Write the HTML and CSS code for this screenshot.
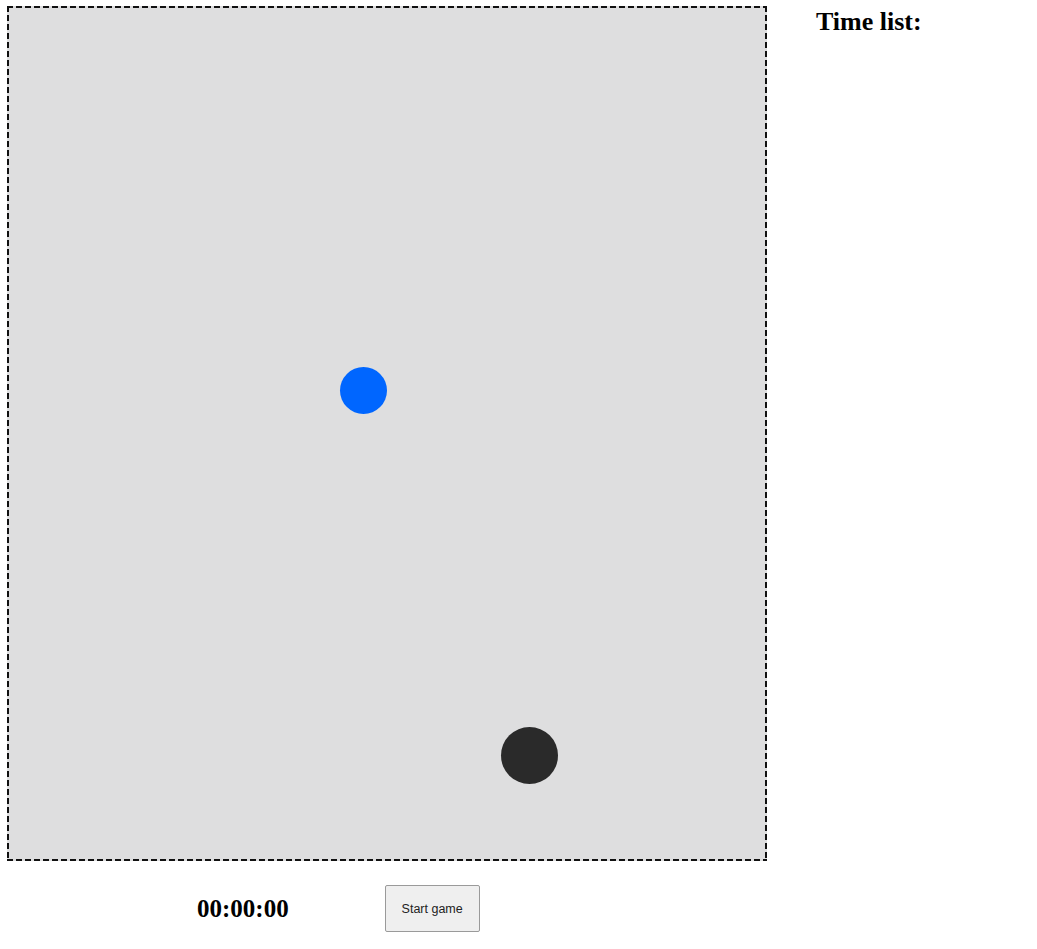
FILE: index.html
```html
<!DOCTYPE html>
<html>
<head>
<meta charset="utf-8">
<link rel="stylesheet" href="styles.css">
</head>
<body>
<div class="page">
  <div class="game-col">
    <div class="field">
      <div class="ball ball-blue"></div>
      <div class="ball ball-dark"></div>
    </div>
    <div class="controls">
      <div class="timer">00:00:00</div>
      <button class="start-btn">Start game</button>
    </div>
  </div>
  <div class="side">
    <h2 class="side-title">Time list:</h2>
  </div>
</div>
</body>
</html>
```
FILE: styles.css
```css
html, body {
  margin: 0;
  background: #ffffff;
}
body {
  padding: 6px 7px;
  font-family: "Liberation Serif", "Times New Roman", serif;
  color: #000;
}
.page {
  display: flex;
  align-items: flex-start;
}
.game-col {
  display: flex;
  flex-direction: column;
}
.field {
  position: relative;
  width: 760px;
  height: 855px;
  background:
    repeating-linear-gradient(90deg, #111 0 6px, transparent 6px 9px) left top / 100% 2px no-repeat,
    repeating-linear-gradient(90deg, #111 0 6px, transparent 6px 9px) left bottom / 100% 2px no-repeat,
    repeating-linear-gradient(180deg, #111 0 6px, transparent 6px 9px) left top / 2px 100% no-repeat,
    repeating-linear-gradient(180deg, #111 0 6px, transparent 6px 9px) right top / 2px 100% no-repeat,
    #dededf;
}
.ball {
  position: absolute;
  border-radius: 50%;
}
.ball-blue {
  left: 333px;
  top: 361px;
  width: 47px;
  height: 47px;
  background: #0066ff;
}
.ball-dark {
  left: 494px;
  top: 721px;
  width: 57px;
  height: 57px;
  background: #2a2a2a;
}
.controls {
  display: flex;
  align-items: center;
  margin-top: 24px;
  padding-left: 190px;
  gap: 96px;
}
.timer {
  font-size: 25px;
  font-weight: bold;
}
.start-btn {
  width: 95px;
  height: 47px;
  background: #efefef;
  border: 1px solid #9a9a9a;
  border-radius: 2px;
  font-family: "Liberation Sans", Arial, sans-serif;
  font-size: 12.5px;
  color: #222;
  padding: 0;
}
.side {
  margin-left: 49px;
}
.side-title {
  margin: 1px 0 0;
  font-size: 26px;
  font-weight: bold;
}
```
